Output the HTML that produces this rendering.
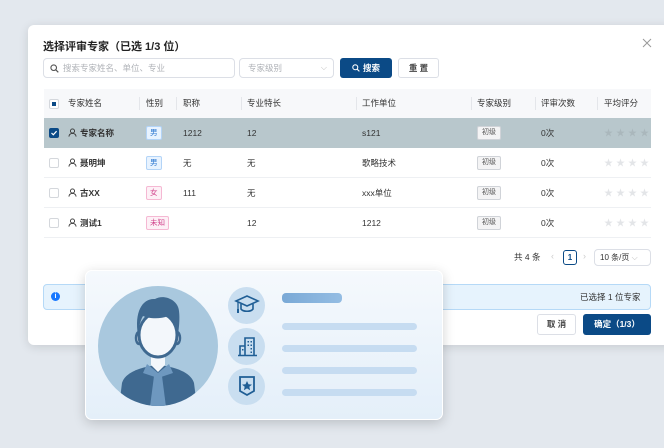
<!DOCTYPE html>
<html><head><meta charset="utf-8"><style>
*{box-sizing:border-box;margin:0;padding:0}
body{width:664px;height:448px;overflow:hidden;background:#e3e8ee;font-family:"Liberation Sans","Noto Sans CJK SC",sans-serif;font-size:9px;color:#333;position:relative}
.modal{position:absolute;left:28px;top:25px;width:660px;height:320px;background:#fff;border-radius:6px;box-shadow:0 2px 10px rgba(0,0,0,.12)}
.abs{position:absolute}
.title{left:43px;top:38px;font-size:11px;font-weight:bold;color:#222}
.inp{border:1px solid #dcdfe6;border-radius:4px;background:#fff;color:#b0b3b8;font-size:8.5px;line-height:18px}
.btn{border-radius:3px;font-size:8.5px;text-align:center}
.th{top:89px;height:29px;left:44px;width:607px;background:#f7f8fa}
.row{left:44px;width:607px;height:30px;border-bottom:1px solid #eef0f3}
.cell{position:absolute;top:0;line-height:30px;font-size:8.5px;color:#333;white-space:nowrap}
.th .cell{line-height:29px;color:#333}
.sep{position:absolute;top:8px;width:1px;height:13px;background:#e4e6ea}
.cb{position:absolute;left:5px;top:10px;width:10px;height:10px;border:1px solid #d4d7dc;border-radius:2px;background:#fff}
.tag{position:absolute;top:8px;height:14px;line-height:12px;border:1px solid;border-radius:2px;font-size:7.5px;padding:0 3px}
.lv{position:absolute;left:433px;top:8px;height:14px;line-height:12px;border:1px solid #d0d3d8;border-radius:2px;background:#f4f4f5;font-size:7px;color:#555;padding:0 4px}
.stars{position:absolute;left:560px;top:0;line-height:30px;color:#e3e5e8;font-size:9px;letter-spacing:3px}
.user{display:inline-block;vertical-align:-1px;margin-right:3px}
.card{left:85px;top:270px;width:358px;height:150px;border-radius:7px;background:linear-gradient(180deg,#f5f9fd,#e4eff9);box-shadow:0 3px 12px rgba(0,0,0,.18);border:1px solid #fff}
.ic{position:absolute;width:37px;height:37px;border-radius:50%;background:#c9def0}
.bar{position:absolute;left:196px;width:135px;height:7px;border-radius:4px;background:#c6dcf1}
</style></head><body>
<div class="modal"></div>
<div class="abs title">选择评审专家（已选 1/3 位）</div>
<svg class="abs" style="left:642px;top:38px" width="10" height="10" viewBox="0 0 10 10"><path d="M1 1L9 9M9 1L1 9" stroke="#999" stroke-width="1"/></svg>
<div class="abs inp" style="left:43px;top:58px;width:192px;height:20px;padding-left:19px">搜索专家姓名、单位、专业</div>
<svg class="abs" style="left:50px;top:64px" width="9" height="9" viewBox="0 0 9 9"><circle cx="3.7" cy="3.7" r="2.8" fill="none" stroke="#555" stroke-width="1.1"/><path d="M5.8 5.8L8.3 8.3" stroke="#555" stroke-width="1.2"/></svg>
<div class="abs inp" style="left:239px;top:58px;width:95px;height:20px;padding-left:8px">专家级别<span style="position:absolute;right:6px;top:0;color:#bbb;font-size:8px">⌵</span></div>
<div class="abs btn" style="left:340px;top:58px;width:52px;height:20px;background:#0b4a86;color:#fff;line-height:20px;font-weight:bold">
<svg width="8" height="8" viewBox="0 0 9 9" style="vertical-align:-1px;margin-right:3px"><circle cx="3.7" cy="3.7" r="2.8" fill="none" stroke="#fff" stroke-width="1.2"/><path d="M5.8 5.8L8.3 8.3" stroke="#fff" stroke-width="1.3"/></svg>搜索</div>
<div class="abs btn" style="left:398px;top:58px;width:41px;height:20px;border:1px solid #dcdfe6;line-height:18px;background:#fff;font-weight:bold;color:#444">重 置</div>

<div class="abs th">
<div class="cb" style="left:5px;border-color:#d4d7dc"><div style="position:absolute;left:2px;top:2px;width:4px;height:4px;background:#0b4a86"></div></div>
<div class="cell" style="left:24px">专家姓名</div><div class="sep" style="left:95px"></div>
<div class="cell" style="left:102px">性别</div><div class="sep" style="left:132px"></div>
<div class="cell" style="left:139px">职称</div><div class="sep" style="left:197px"></div>
<div class="cell" style="left:203px">专业特长</div><div class="sep" style="left:312px"></div>
<div class="cell" style="left:318px">工作单位</div><div class="sep" style="left:427px"></div>
<div class="cell" style="left:433px">专家级别</div><div class="sep" style="left:491px"></div>
<div class="cell" style="left:497px">评审次数</div><div class="sep" style="left:553px"></div>
<div class="cell" style="left:560px">平均评分</div>
</div>

<svg width="0" height="0" style="position:absolute"><defs><symbol id="u" viewBox="0 0 10 10"><circle cx="5" cy="3.3" r="2.3" fill="none" stroke="#333" stroke-width="1"/><path d="M1 9.5C1.3 7 3 6 5 6S8.7 7 9 9.5" fill="none" stroke="#333" stroke-width="1"/></symbol></defs></svg>

<div class="abs row" style="top:118px;background:#b8c7cc;border-bottom-color:#b8c7cc">
<div class="cb" style="background:#0b4a86;border-color:#0b4a86"><svg width="8" height="8" viewBox="0 0 8 8" style="position:absolute;left:0;top:0"><path d="M1.5 4L3.3 5.8L6.6 2.2" stroke="#fff" stroke-width="1.2" fill="none"/></svg></div>
<div class="cell" style="left:24px;font-weight:bold"><svg class="user" width="9" height="9"><use href="#u"/></svg>专家名称</div>
<div class="tag" style="left:102px;background:#e8f3ff;border-color:#b3d4f7;color:#2d78d0">男</div>
<div class="cell" style="left:139px">1212</div><div class="cell" style="left:203px">12</div><div class="cell" style="left:318px">s121</div>
<div class="lv">初级</div><div class="cell" style="left:497px">0次</div><div class="stars" style="color:#aab7bc">★★★★</div>
</div>
<div class="abs row" style="top:148px">
<div class="cb"></div><div class="cell" style="left:24px;font-weight:bold"><svg class="user" width="9" height="9"><use href="#u"/></svg>聂明坤</div>
<div class="tag" style="left:102px;background:#e8f3ff;border-color:#b3d4f7;color:#2d78d0">男</div>
<div class="cell" style="left:139px">无</div><div class="cell" style="left:203px">无</div><div class="cell" style="left:318px">歌略技术</div>
<div class="lv">初级</div><div class="cell" style="left:497px">0次</div><div class="stars">★★★★</div>
</div>
<div class="abs row" style="top:178px">
<div class="cb"></div><div class="cell" style="left:24px;font-weight:bold"><svg class="user" width="9" height="9"><use href="#u"/></svg>古XX</div>
<div class="tag" style="left:102px;background:#fdf0f6;border-color:#f5b8d3;color:#d0408a">女</div>
<div class="cell" style="left:139px">111</div><div class="cell" style="left:203px">无</div><div class="cell" style="left:318px">xxx单位</div>
<div class="lv">初级</div><div class="cell" style="left:497px">0次</div><div class="stars">★★★★</div>
</div>
<div class="abs row" style="top:208px">
<div class="cb"></div><div class="cell" style="left:24px;font-weight:bold"><svg class="user" width="9" height="9"><use href="#u"/></svg>测试1</div>
<div class="tag" style="left:102px;background:#fdf0f6;border-color:#f5b8d3;color:#d0408a">未知</div>
<div class="cell" style="left:203px">12</div><div class="cell" style="left:318px">1212</div>
<div class="lv">初级</div><div class="cell" style="left:497px">0次</div><div class="stars">★★★★</div>
</div>

<div class="abs" style="left:514px;top:251px;font-size:8.5px;line-height:12px">共 4 条</div>
<div class="abs" style="left:551px;top:251px;color:#ccc;font-size:9px">‹</div>
<div class="abs" style="left:563px;top:250px;width:14px;height:15px;border:1px solid #0b4a86;border-radius:3px;text-align:center;line-height:13px;font-weight:bold;color:#0b4a86;font-size:8px">1</div>
<div class="abs" style="left:583px;top:251px;color:#ccc;font-size:9px">›</div>
<div class="abs inp" style="left:594px;top:249px;width:57px;height:17px;line-height:15px;padding-left:5px;color:#333;font-size:8px">10 条/页 <span style="color:#bbb">⌵</span></div>

<div class="abs" style="left:43px;top:284px;width:608px;height:26px;background:#e6f3fd;border:1px solid #b5d9f7;border-radius:4px"></div>
<div class="abs" style="left:51px;top:292px;width:9px;height:9px;border-radius:50%;background:#1677ff;color:#fff;font-size:7px;line-height:9px;text-align:center;font-weight:bold">i</div>
<div class="abs" style="left:580px;top:292px;font-size:8.5px;line-height:11px">已选择 1 位专家</div>
<div class="abs btn" style="left:537px;top:314px;width:39px;height:21px;border:1px solid #dcdfe6;line-height:19px;background:#fff;font-weight:bold;color:#444">取 消</div>
<div class="abs btn" style="left:583px;top:314px;width:68px;height:21px;background:#0b4a86;color:#fff;line-height:21px;font-weight:bold">确定（1/3）</div>

<div class="abs card">
<svg style="position:absolute;left:11px;top:14px" width="122" height="122" viewBox="0 0 122 122">
<defs><clipPath id="c"><circle cx="61" cy="61" r="60"/></clipPath></defs>
<circle cx="61" cy="61" r="60" fill="#a9c8de"/>
<g clip-path="url(#c)">
<path d="M22 122L25 98C28 88 42 82 61 80C80 82 94 88 97 98L100 122Z" fill="#3f6990"/>
<path d="M50 79L61 88L72 79L76 88L61 93L46 88Z" fill="#6e98bf"/>
<path d="M57 91L65 91L69 122L53 122Z" fill="#6e98bf"/>
<path d="M54 66L68 66L68 80L61 87L54 80Z" fill="#f3f7fb"/>
</g>
<ellipse cx="42" cy="53" rx="3" ry="6" fill="#f3f7fb" stroke="#3f6990" stroke-width="2.5"/>
<ellipse cx="80" cy="53" rx="3" ry="6" fill="#f3f7fb" stroke="#3f6990" stroke-width="2.5"/>
<ellipse cx="61" cy="50" rx="19" ry="22" fill="#f3f7fb" stroke="#3f6990" stroke-width="3"/>
<path d="M41 50C37 26 46 13 58 14C66 9 81 14 82 26C83 34 82 42 81 50C79 40 76 34 71 31C62 35 50 33 46 31C43 36 42 42 41 50Z" fill="#3f6990"/>
</svg>
<div class="ic" style="left:142px;top:16px"></div>
<div class="ic" style="left:142px;top:57px"></div>
<div class="ic" style="left:142px;top:97px"></div>
<svg style="position:absolute;left:148px;top:23px" width="26" height="22" viewBox="0 0 26 22"><path d="M2 7L13 2L24 7L13 12Z" fill="none" stroke="#1f5e95" stroke-width="1.6"/><path d="M7 10V15C9 18 17 18 19 15V10" fill="none" stroke="#1f5e95" stroke-width="1.6"/><path d="M4 8V16" stroke="#1f5e95" stroke-width="1.3"/><rect x="3" y="15" width="2" height="4" fill="#1f5e95"/></svg>
<svg style="position:absolute;left:151px;top:64px" width="22" height="22" viewBox="0 0 22 22"><path d="M8 20V3H17V20" fill="none" stroke="#1f5e95" stroke-width="1.6"/><path d="M3 20V11H8" fill="none" stroke="#1f5e95" stroke-width="1.6"/><path d="M1 20.5H20" stroke="#1f5e95" stroke-width="1.6"/><g fill="#1f5e95"><rect x="10.5" y="6" width="1.5" height="1.5"/><rect x="13.5" y="6" width="1.5" height="1.5"/><rect x="10.5" y="9.5" width="1.5" height="1.5"/><rect x="13.5" y="9.5" width="1.5" height="1.5"/><rect x="13.5" y="13" width="1.5" height="1.5"/><rect x="13.5" y="16.5" width="1.5" height="1.5"/><rect x="5" y="14" width="1.5" height="1.5"/></g></svg>
<svg style="position:absolute;left:152px;top:104px" width="18" height="22" viewBox="0 0 18 22"><path d="M2 2H16V16L9 20L2 16Z" fill="none" stroke="#1f5e95" stroke-width="1.8"/><path d="M9 6L10.5 9.3L14 9.6L11.3 11.8L12.1 15.2L9 13.4L5.9 15.2L6.7 11.8L4 9.6L7.5 9.3Z" fill="#1f5e95"/></svg>
<div class="bar" style="top:22px;width:60px;height:10px;background:linear-gradient(90deg,#7aa9d6,#94bde3)"></div>
<div class="bar" style="top:52px"></div>
<div class="bar" style="top:74px"></div>
<div class="bar" style="top:96px"></div>
<div class="bar" style="top:118px"></div>
</div>
</body></html>
